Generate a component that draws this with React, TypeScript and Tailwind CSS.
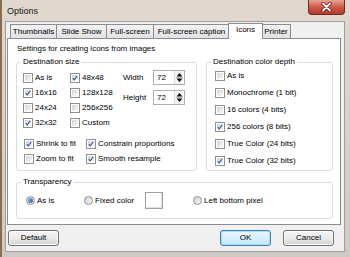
import React from 'react';

type CheckProps = { label: string; checked?: boolean; className?: string };

const Check = ({ label, checked, className = '' }: CheckProps) => (
  <div className={`flex items-center ${className}`}>
    <div className="w-[10px] h-[10px] shrink-0 border border-[#8e8f8f] bg-white p-px">
      <div className="w-full h-full bg-linear-to-br from-[#d2d2d2] to-[#fafafa] flex items-center justify-center">
        {checked && (
          <svg width="8" height="8" viewBox="0 0 8 8">
            <path d="M1 4.2 L3 6.4 L7 1.2" fill="none" stroke="#3a57a6" strokeWidth="1.5" />
          </svg>
        )}
      </div>
    </div>
    <span className="ml-[2px] whitespace-nowrap">{label}</span>
  </div>
);

const Radio = ({ label, checked, className = '' }: CheckProps) => (
  <div className={`flex items-center ${className}`}>
    <div className="w-[9px] h-[9px] shrink-0 rounded-full border border-[#8e8f8f] bg-linear-to-br from-[#d0d0d0] to-[#f8f8f8] flex items-center justify-center">
      {checked && <div className="w-[5px] h-[5px] rounded-full bg-linear-to-br from-[#7ab8f0] to-[#1d5fbf]" />}
    </div>
    <span className="ml-[2px] whitespace-nowrap">{label}</span>
  </div>
);

const Group = ({ title, className = '', children }: { title: string; className?: string; children: React.ReactNode }) => (
  <div className={`relative border border-[#d5dfe5] rounded-[3px] ${className}`}>
    <span className="absolute left-[4px] top-[-6px] bg-white px-[2px] leading-[10px]">{title}</span>
    {children}
  </div>
);

const Spin = ({ value }: { value: string }) => (
  <div className="w-[32px] h-[15px] border border-[#abadb3] bg-white flex items-center">
    <span className="pl-[3px] flex-1">{value}</span>
    <div className="w-[9px] h-[13px] mr-px bg-[#f4f4f4] border-l border-[#dcdcdc] flex items-center justify-center">
      <svg width="7" height="11" viewBox="0 0 7 11">
        <polygon points="3.5,1 6.5,4.5 0.5,4.5" fill="#111" />
        <rect x="0.5" y="5.2" width="6" height="0.6" fill="#888" />
        <polygon points="0.5,6.5 6.5,6.5 3.5,10" fill="#111" />
      </svg>
    </div>
  </div>
);

const Tab = ({ label, width, className = '' }: { label: string; width: number; className?: string }) => (
  <div
    className={`h-[14px] border border-b-0 border-[#898c95] bg-linear-to-b from-[#f3f3f3] to-[#e2e2e2] flex items-center justify-center leading-[10px] ${className}`}
    style={{ width }}
  >
    {label}
  </div>
);

const Button = ({ label, primary, className = '' }: { label: string; primary?: boolean; className?: string }) => (
  <div
    className={`h-[16px] w-[51px] rounded-[3px] border flex items-center justify-center leading-[10px] ${
      primary
        ? 'border-[#3c7fb1] bg-linear-to-b from-[#eaf6fd] via-[#d9f0fc] to-[#bee6fd] shadow-[inset_0_0_0_1px_#a9dcf6]'
        : 'border-[#707070] bg-linear-to-b from-[#f4f4f4] via-[#ebebeb] to-[#d2d2d2] shadow-[inset_0_0_0_1px_#fcfcfc]'
    } ${className}`}
  >
    {label}
  </div>
);

export default function App() {
  return (
    <div className="w-[350px] h-[257px] flex flex-col overflow-hidden border-l-2 border-[#8a6c52] bg-linear-to-b from-[#e0d8ce] via-[#d8d2cb] to-[#cdc9c4] font-['Liberation_Sans',Arial,sans-serif] text-[8px] text-black">
      <div className="h-[21px] shrink-0 flex items-start">
        <span className="ml-[5px] mt-[6px] text-[9px] leading-[11px] text-[#141414]">Options</span>
        <div className="ml-auto mr-[5px] w-[37px] h-[15px] rounded-b-[4px] border border-t-0 border-[#6b2a20] bg-linear-to-b from-[#e8a592] via-[#cf5a45] to-[#b73a2a] flex items-center justify-center">
          <svg width="11" height="10" viewBox="0 0 11 10">
            <path d="M2 1.5 L9 8.5 M9 1.5 L2 8.5" stroke="#5a1e16" strokeWidth="3.4" strokeLinecap="round" />
            <path d="M2 1.5 L9 8.5 M9 1.5 L2 8.5" stroke="#ffffff" strokeWidth="1.8" strokeLinecap="round" />
          </svg>
        </div>
      </div>

      <div className="ml-[3px] mr-[5px] h-[231px] shrink-0 bg-[#f0f0f0] border border-[#a49d95] flex flex-col">
        <div className="ml-[1px] mt-[1px] w-[334px]">
          <div className="h-[15px] flex items-end pl-[3px]">
            <Tab label="Thumbnails" width={47} />
            <Tab label="Slide Show" width={51} className="-ml-px" />
            <Tab label="Full-screen" width={48} className="-ml-px" />
            <Tab label="Full-screen caption" width={77} className="-ml-px" />
            <div className="relative z-10 -ml-[2px] mb-[-1px] w-[35px] h-[16px] border border-b-0 border-[#898c95] bg-white flex items-start justify-center pt-[1px] leading-[10px]">
              Icons
            </div>
            <Tab label="Printer" width={30} className="-ml-[2px]" />
          </div>
          <div className="h-[187px] border border-[#898c95] bg-white flex flex-col">
            <div className="pl-[9px] pt-[5px] leading-[10px]">Settings for creating icons from images</div>
            <div className="flex pl-[8px] mt-[8px]">
              <Group title="Destination size" className="w-[181px] h-[109px]">
                <div className="flex pt-[7px] pl-[6px]">
                  <div className="w-[47px] flex flex-col">
                    <Check label="As is" className="h-[15px]" />
                    <Check label="16x16" checked className="h-[15px]" />
                    <Check label="24x24" className="h-[15px]" />
                    <Check label="32x32" checked className="h-[15px]" />
                  </div>
                  <div className="w-[53px] flex flex-col">
                    <Check label="48x48" checked className="h-[15px]" />
                    <Check label="128x128" className="h-[15px]" />
                    <Check label="256x256" className="h-[15px]" />
                    <Check label="Custom" className="h-[15px]" />
                  </div>
                  <div className="flex flex-col gap-[5px]">
                    <div className="flex items-center h-[15px]">
                      <span className="w-[30px]">Width</span>
                      <Spin value="72" />
                    </div>
                    <div className="flex items-center h-[15px]">
                      <span className="w-[30px]">Height</span>
                      <Spin value="72" />
                    </div>
                  </div>
                </div>
                <div className="flex pl-[7px] mt-[6px]">
                  <div className="w-[62px] flex flex-col">
                    <Check label="Shrink to fit" checked className="h-[15px]" />
                    <Check label="Zoom to fit" className="h-[15px]" />
                  </div>
                  <div className="flex flex-col">
                    <Check label="Constrain proportions" checked className="h-[15px]" />
                    <Check label="Smooth resample" checked className="h-[15px]" />
                  </div>
                </div>
              </Group>
              <Group title="Destination color depth" className="ml-[9px] w-[127px] h-[109px]">
                <div className="flex flex-col pt-[4px] pl-[8px]">
                  <Check label="As is" className="h-[17px]" />
                  <Check label="Monochrome (1 bit)" className="h-[17px]" />
                  <Check label="16 colors (4 bits)" className="h-[17px]" />
                  <Check label="256 colors (8 bits)" checked className="h-[17px]" />
                  <Check label="True Color (24 bits)" className="h-[17px]" />
                  <Check label="True Color (32 bits)" checked className="h-[17px]" />
                </div>
              </Group>
            </div>
            <div className="pl-[8px] mt-[11px]">
              <Group title="Transparency" className="w-[317px] h-[37px]">
                <div className="flex items-center h-[17px] mt-[9px] pl-[9px]">
                  <Radio label="As is" checked className="w-[58px]" />
                  <Radio label="Fixed color" className="w-[61px]" />
                  <div className="w-[18px] h-[17px] border border-[#a0a0a0] bg-white shadow-[inset_-1px_-1px_0_#e0e0e0]" />
                  <Radio label="Left bottom pixel" className="ml-[30px]" />
                </div>
              </Group>
            </div>
          </div>
        </div>
        <div className="flex mt-[5px] pl-[2px] pr-[10px]">
          <Button label="Default" />
          <Button label="OK" primary className="ml-auto" />
          <Button label="Cancel" className="ml-[12px]" />
        </div>
      </div>
    </div>
  );
}
